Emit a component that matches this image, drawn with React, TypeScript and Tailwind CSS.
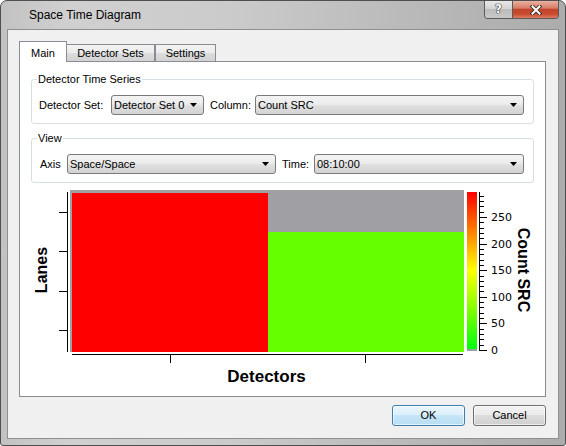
import React from "react";

function Combo({ text, className }: { text: string; className: string }) {
  return (
    <div
      className={
        "flex h-[20px] items-center justify-between rounded-[3px] border border-[#7a7a7a] bg-[linear-gradient(#f4f4f4,#ececec_45%,#dfdfdf_55%,#d3d3d3)] pl-[2px] pr-[6px] " +
        className
      }
    >
      <span className="leading-[13px]">{text}</span>
      <svg width="7" height="4" viewBox="0 0 7 4">
        <path d="M0 0H7L3.5 4Z" fill="#000" />
      </svg>
    </div>
  );
}

function Chart() {
  const minors: number[] = [];
  for (let v = 0; v <= 290; v += 10) minors.push(v);
  const ty = (v: number) => Math.round(167 - 0.532 * v) + 0.5;
  return (
    <svg width="525" height="213" viewBox="0 0 525 213" className="block">
      <defs>
        <linearGradient id="cb" x1="0" y1="0" x2="0" y2="1">
          <stop offset="0%" stopColor="#ff0000" />
          <stop offset="25%" stopColor="#ff8000" />
          <stop offset="50%" stopColor="#ffff00" />
          <stop offset="75%" stopColor="#80ff00" />
          <stop offset="100%" stopColor="#00ff10" />
        </linearGradient>
      </defs>
      {/* plot */}
      <rect x="50" y="7" width="394" height="162" fill="#a0a0a4" />
      <rect x="52" y="10" width="196" height="159" fill="#ff0000" />
      <rect x="248" y="49" width="196" height="120" fill="#66ff00" />
      {/* y axis */}
      <line x1="47.5" y1="9" x2="47.5" y2="169" stroke="#000" strokeWidth="1" />
      {[29, 68, 108, 147].map((y) => (
        <line key={y} x1="39" y1={y + 0.5} x2="47" y2={y + 0.5} stroke="#000" strokeWidth="1" />
      ))}
      {/* x axis */}
      <line x1="52" y1="171.5" x2="443" y2="171.5" stroke="#000" strokeWidth="1" />
      {[150.5, 345.5].map((x) => (
        <line key={x} x1={x} y1="171" x2={x} y2="180" stroke="#000" strokeWidth="1" />
      ))}
      {/* colorbar */}
      <rect x="447" y="9" width="10" height="157" fill="url(#cb)" />
      <rect x="447" y="166" width="10" height="2" fill="#a0a0a4" />
      <line x1="459.5" y1="9" x2="459.5" y2="168" stroke="#000" strokeWidth="1" />
      {minors.map((v) => (
        <line
          key={v}
          x1="459"
          y1={ty(v)}
          x2={v % 50 === 0 ? 467 : 464}
          y2={ty(v)}
          stroke="#000"
          strokeWidth="1"
        />
      ))}
      {[0, 50, 100, 150, 200, 250].map((v) => (
        <text
          key={v}
          x="471"
          y={ty(v)}
          dominantBaseline="central"
          fontFamily="'DejaVu Sans', Verdana, sans-serif"
          fontSize="11"
          fill="#000"
        >
          {v}
        </text>
      ))}
      <text
        transform="translate(503 87) rotate(90)"
        textAnchor="middle"
        dominantBaseline="central"
        fontFamily="'Liberation Sans', Arial, sans-serif"
        fontWeight="bold"
        fontSize="16"
        fill="#000"
      >
        Count SRC
      </text>
      <text
        transform="translate(21 87) rotate(-90)"
        textAnchor="middle"
        dominantBaseline="central"
        fontFamily="'Liberation Sans', Arial, sans-serif"
        fontWeight="bold"
        fontSize="16"
        fill="#000"
      >
        Lanes
      </text>
      <text
        x="246.5"
        y="193"
        textAnchor="middle"
        dominantBaseline="central"
        fontFamily="'Liberation Sans', Arial, sans-serif"
        fontWeight="bold"
        fontSize="17"
        fill="#000"
      >
        Detectors
      </text>
    </svg>
  );
}

export default function App() {
  return (
    <div className="h-[446px] w-[566px] font-['Liberation_Sans',Arial,sans-serif] text-[11px] text-black">
      <div className="flex h-full w-full flex-col rounded-t-[7px] rounded-b-[3px] border border-[#4f4f4f] bg-[linear-gradient(to_right,#c2c2c2,#d0d0d0_12%,#cbcbcb_40%,#b8b8b8_75%,#acacac)]">
        {/* title bar */}
        <div className="flex h-[28px] shrink-0 items-start">
          <div className="pl-[28px] pt-[7px] text-[12px] leading-[14px] text-black">Space Time Diagram</div>
          <div className="ml-auto mr-[6px] flex h-[18px] overflow-hidden rounded-b-[4px] border border-t-0 border-[#5a5a5a]">
            <div className="flex w-[28px] items-center justify-center border-r border-[#5a5a5a] bg-[linear-gradient(#e8e8e8,#d4d4d4_45%,#bcbcbc_50%,#c9c9c9)]">
              <span className="pb-[1px] font-['DejaVu_Sans',sans-serif] text-[12px] font-bold leading-none text-white [text-shadow:0_0_1px_#222,0_0_1px_#222,0_0_1px_#222]">
                ?
              </span>
            </div>
            <div className="flex w-[45px] items-center justify-center bg-[linear-gradient(#eab0a2,#d77d66_42%,#c4442b_50%,#c84a30_75%,#dd7c60)]">
              <svg width="12" height="10" viewBox="0 0 12 10">
                <path d="M2.5 1.5L9.5 8.5M9.5 1.5L2.5 8.5" stroke="#3a2a28" strokeWidth="3.8" strokeLinecap="square" />
                <path d="M2.5 1.5L9.5 8.5M9.5 1.5L2.5 8.5" stroke="#ffffff" strokeWidth="2" strokeLinecap="square" />
              </svg>
            </div>
          </div>
        </div>
        {/* client */}
        <div className="mx-[6px] mb-[6px] flex flex-1 flex-col border border-[#8e8f8f] bg-[#f0f0f0]">
          {/* tabs */}
          <div className="ml-[11px] mt-[11px] flex h-[20px] items-end">
            <div className="relative z-10 -mb-px flex h-[21px] w-[48px] items-center justify-center border border-b-0 border-[#898c95] bg-white pt-[2px]">
              Main
            </div>
            <div className="flex h-[17px] w-[88px] items-center justify-center border border-b-0 border-l-0 border-[#898c95] bg-[linear-gradient(#f3f3f3,#ebebeb_50%,#dddddd_50%,#d2d2d2)] pt-[1px]">
              Detector Sets
            </div>
            <div className="flex h-[17px] w-[61px] items-center justify-center border border-b-0 border-[#898c95] bg-[linear-gradient(#f3f3f3,#ebebeb_50%,#dddddd_50%,#d2d2d2)] pt-[1px]">
              Settings
            </div>
          </div>
          {/* panel */}
          <div className="ml-[11px] flex h-[336px] w-[527px] flex-col border border-[#898c95] bg-white">
            <div className="px-[11px] pt-[17px]">
              <div className="relative h-[45px] rounded-[3px] border border-[#d5dfe5]">
                <span className="absolute left-[5px] top-[-7px] bg-white px-[1px] leading-[13px]">
                  Detector Time Series
                </span>
                <div className="flex items-center pl-[7px] pr-[9px] pt-[15px]">
                  <span className="w-[72px] shrink-0">Detector Set:</span>
                  <Combo text="Detector Set 0" className="w-[93px] shrink-0" />
                  <span className="w-[51px] shrink-0 pl-[6px]">Column:</span>
                  <Combo text="Count SRC" className="flex-1" />
                </div>
              </div>
              <div className="relative mt-[14px] h-[45px] rounded-[3px] border border-[#d5dfe5]">
                <span className="absolute left-[5px] top-[-7px] bg-white px-[1px] leading-[13px]">View</span>
                <div className="flex items-center pl-[8px] pr-[9px] pt-[15px]">
                  <span className="w-[27px] shrink-0">Axis</span>
                  <Combo text="Space/Space" className="w-[209px] shrink-0" />
                  <span className="w-[38px] shrink-0 pl-[6px]">Time:</span>
                  <Combo text="08:10:00" className="flex-1" />
                </div>
              </div>
            </div>
            <Chart />
          </div>
          {/* buttons */}
          <div className="mt-[8px] flex justify-end gap-[8px] pr-[12px]">
            <button className="h-[21px] w-[73px] rounded-[3px] border border-[#3c7fb1] bg-[linear-gradient(#e9f5fc,#dbeffb_50%,#c6e5f7_50%,#b9def3)] shadow-[inset_0_0_0_1px_rgba(255,255,255,0.6)]">
              OK
            </button>
            <button className="h-[21px] w-[73px] rounded-[3px] border border-[#707070] bg-[linear-gradient(#f2f2f2,#ebebeb_50%,#dddddd_50%,#cfcfcf)] shadow-[inset_0_0_0_1px_rgba(255,255,255,0.6)]">
              Cancel
            </button>
          </div>
        </div>
      </div>
    </div>
  );
}
